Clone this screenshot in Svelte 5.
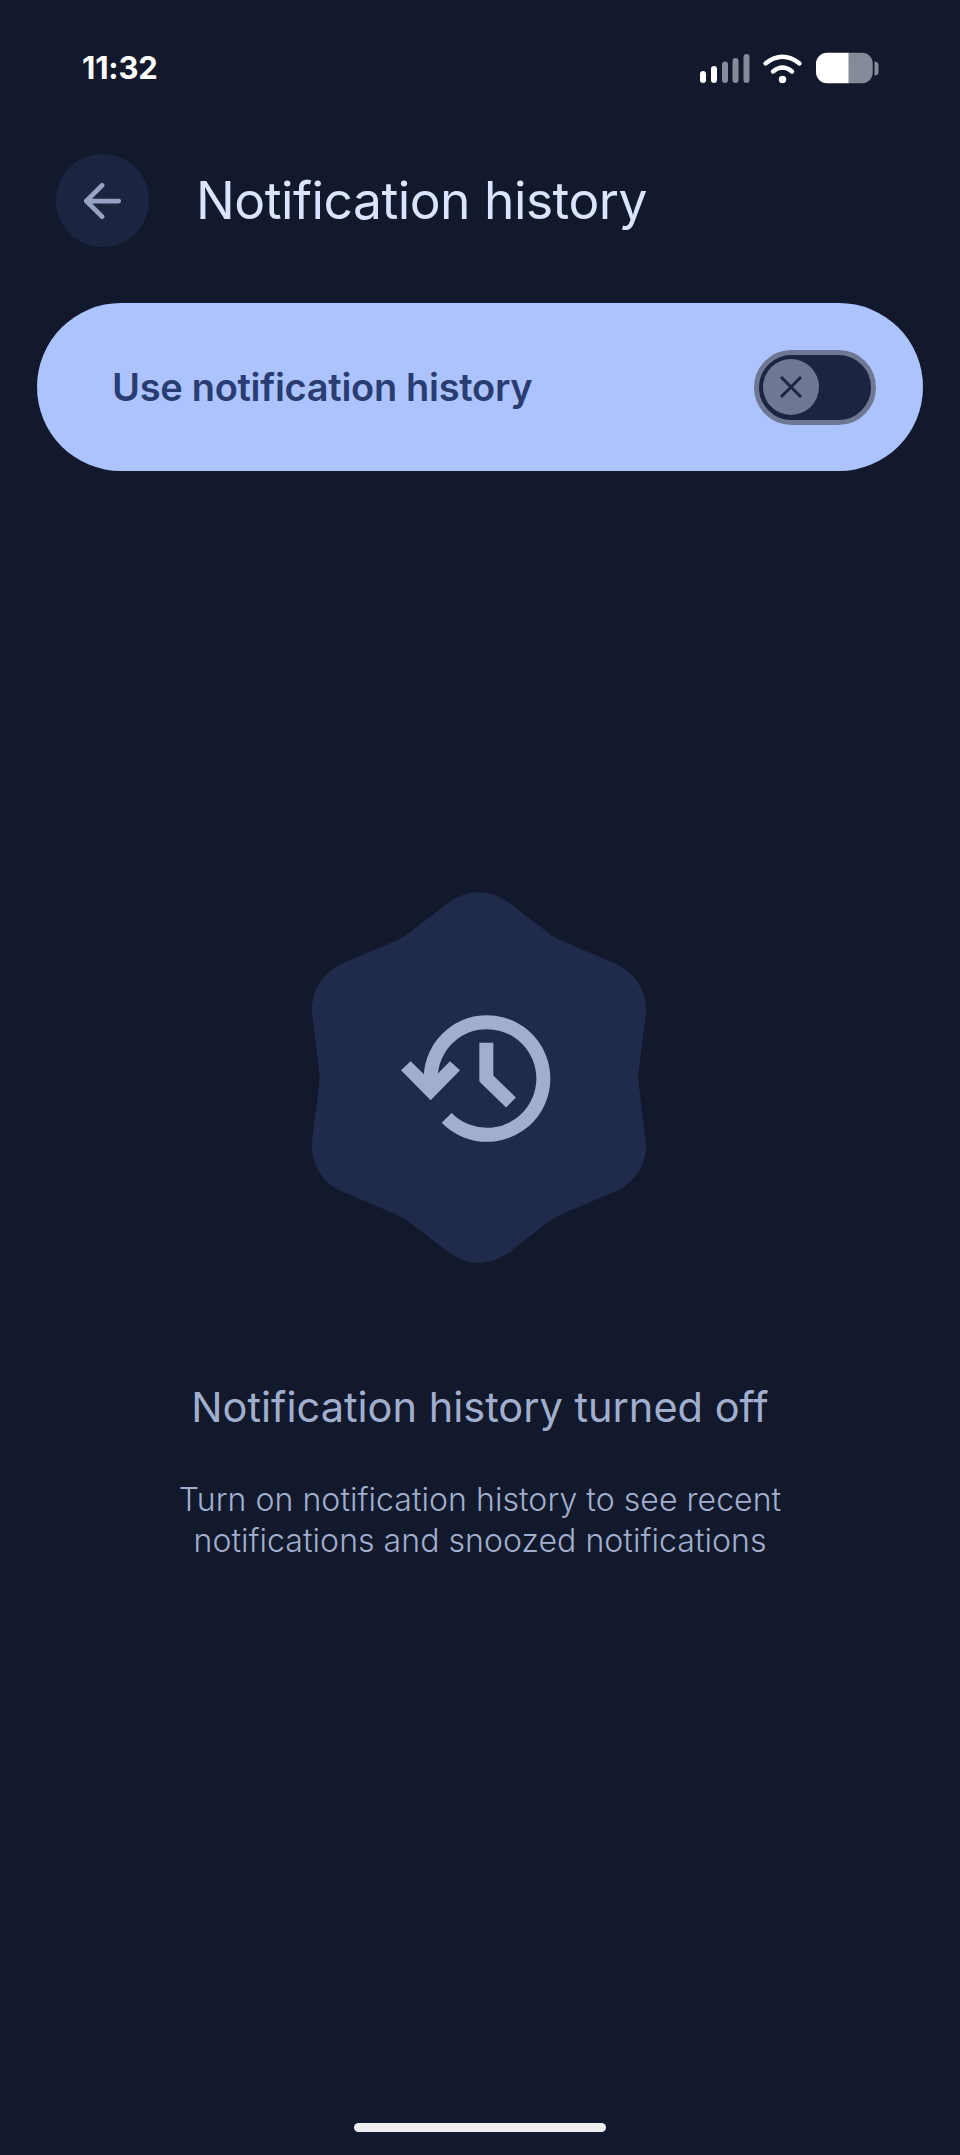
<script>
  let title = 'Notification history';
  let enabled = false;
</script>

<main class="page">
  <div class="status">
    <span class="time">11:32</span>
    <svg class="status-icons" width="240" height="80" viewBox="0 0 240 80" aria-hidden="true">
      <g fill="#fff">
        <rect x="40" y="41" width="6" height="12" rx="3" />
        <rect x="51" y="36" width="6" height="17" rx="3" />
      </g>
      <g fill="#868b9a">
        <rect x="62" y="31.5" width="6" height="21.5" rx="3" />
        <rect x="72.5" y="28" width="6" height="25" rx="3" />
        <rect x="83.5" y="24" width="6" height="29" rx="3" />
      </g>
      <g fill="none" stroke="#fff" stroke-width="4.4" stroke-linecap="round">
        <path d="M105.5 33.5 Q122.5 20 139.5 33.5" />
        <path d="M113 41.5 Q122.5 33.5 132 41.5" />
      </g>
      <circle cx="122.5" cy="49.5" r="3.7" fill="#fff" />
      <path d="M188.7 22.7H202a10.7 10.7 0 0 1 10.7 10.7v9.2a10.7 10.7 0 0 1-10.7 10.7H188.7z" fill="#868b9a" />
      <path d="M188.7 22.7H167a11 11 0 0 0-11 11v8.6a11 11 0 0 0 11 11h21.7z" fill="#fff" />
      <path d="M214.5 31.5c2.5 0 4 1.5 4 3.5v7c0 2-1.500 3.500-4 3.500z" fill="#868b9a" />
    </svg>
  </div>

  <header class="top">
    <button class="back" aria-label="Back">
      <svg width="38" height="38" viewBox="0 0 40 40" fill="none" stroke="#98a3c3" stroke-width="5" stroke-linecap="round" stroke-linejoin="round">
        <path d="M36.500 20H2.500M19 3.500 2.500 20 19 36.500" />
      </svg>
    </button>
    <h1>{title}</h1>
  </header>

  <section class="card">
    <span>Use notification history</span>
    <div class="switch" class:on={enabled}>
      <div class="thumb">
        <svg width="24" height="24" viewBox="0 0 24 24" fill="none" stroke="#1b2540" stroke-width="3">
          <path d="M2 2 22 22M22 2 2 22" />
        </svg>
      </div>
    </div>
  </section>

  <section class="empty">
    <svg class="blob" width="334" height="371" viewBox="66 66 1002 1112" aria-hidden="true">
      <path fill="#202b4b" d="M566 66C600 66 630 78 660 100L770 185C785 197 800 205 820 214L975 280C1030 305 1068 355 1068 420C1068 440 1045 600 1045 622C1045 644 1068 805 1068 825C1068 890 1030 940 975 964L820 1030C800 1039 785 1047 770 1059L660 1144C630 1166 600 1178 566 1178C532 1178 502 1166 472 1144L362 1059C347 1047 332 1039 312 1030L157 964C102 940 66 890 66 825C66 805 89 644 89 622C89 600 66 440 66 420C66 355 102 305 157 280L312 214C332 205 347 197 362 185L472 100C502 78 532 66 566 66Z" />
      <g fill="none" stroke="#a2aecd" stroke-width="42">
        <path d="M470 743A169 169 0 1 0 422 625V650" />
        <path d="M333 600 362 573 422 632 480 573 510 600 422 690Z" fill="#a2aecd" stroke="none" />
        <path d="M589 518V625L663 697" />
      </g>
    </svg>
    <h2>Notification history turned off</h2>
    <p>Turn on notification history to see recent<br />notifications and snoozed notifications</p>
  </section>

  <div class="home"></div>
</main>

<style>
  :global(body) {
    background: #12192c;
  }
  .page {
    position: relative;
    width: 960px;
    height: 2155px;
    background: #12192c;
    font-family: Inter, "Open Sans", sans-serif;
    overflow: hidden;
  }
  .status {
    display: flex;
    justify-content: space-between;
    height: 80px;
    padding: 30px 60px 0 82px;
  }
  .time {
    color: #fff;
    font-size: 31px;
    font-weight: 700;
    line-height: 76px;
    letter-spacing: -0.2px;
  }
  .top {
    display: flex;
    align-items: center;
    gap: 47px;
    margin: 44px 0 0 56px;
  }
  .back {
    display: flex;
    align-items: center;
    justify-content: center;
    width: 93px;
    height: 93px;
    padding: 0;
    border: 0;
    border-radius: 50%;
    background: #1b2540;
  }
  h1 {
    margin: 0;
    padding-bottom: 2px;
    color: #dbe4fd;
    font-size: 51.5px;
    font-weight: 400;
    letter-spacing: -0.5px;
  }
  .card {
    display: flex;
    align-items: center;
    justify-content: space-between;
    height: 168px;
    margin: 56px 37px 0 37px;
    padding: 0 47px 0 75px;
    border-radius: 84px;
    background: #adc3fe;
    color: #2a3d72;
    font-size: 38px;
    font-weight: 600;
    letter-spacing: -0.3px;
  }
  .switch {
    display: flex;
    align-items: center;
    box-sizing: border-box;
    width: 122px;
    height: 75px;
    padding-left: 4px;
    border: 5px solid #6e7892;
    border-radius: 38px;
    background: #1b2540;
  }
  .thumb {
    display: flex;
    align-items: center;
    justify-content: center;
    width: 56px;
    height: 56px;
    border-radius: 50%;
    background: #6e7892;
  }
  .empty {
    display: flex;
    flex-direction: column;
    align-items: center;
    margin-top: 421px;
  }
  .blob {
    display: block;
    margin-right: 2px;
  }
  h2 {
    margin: 119px 0 0;
    color: #a2aecd;
    font-size: 41.5px;
    font-weight: 400;
    line-height: 50px;
    letter-spacing: 0;
  }
  p {
    margin: 47px 0 0;
    color: #a2aecd;
    font-size: 32px;
    font-weight: 300;
    line-height: 41px;
    text-align: center;
    letter-spacing: 0.05px;
  }
  .home {
    position: absolute;
    left: 354px;
    top: 2123px;
    width: 252px;
    height: 9px;
    border-radius: 5px;
    background: #eceef0;
  }
</style>
